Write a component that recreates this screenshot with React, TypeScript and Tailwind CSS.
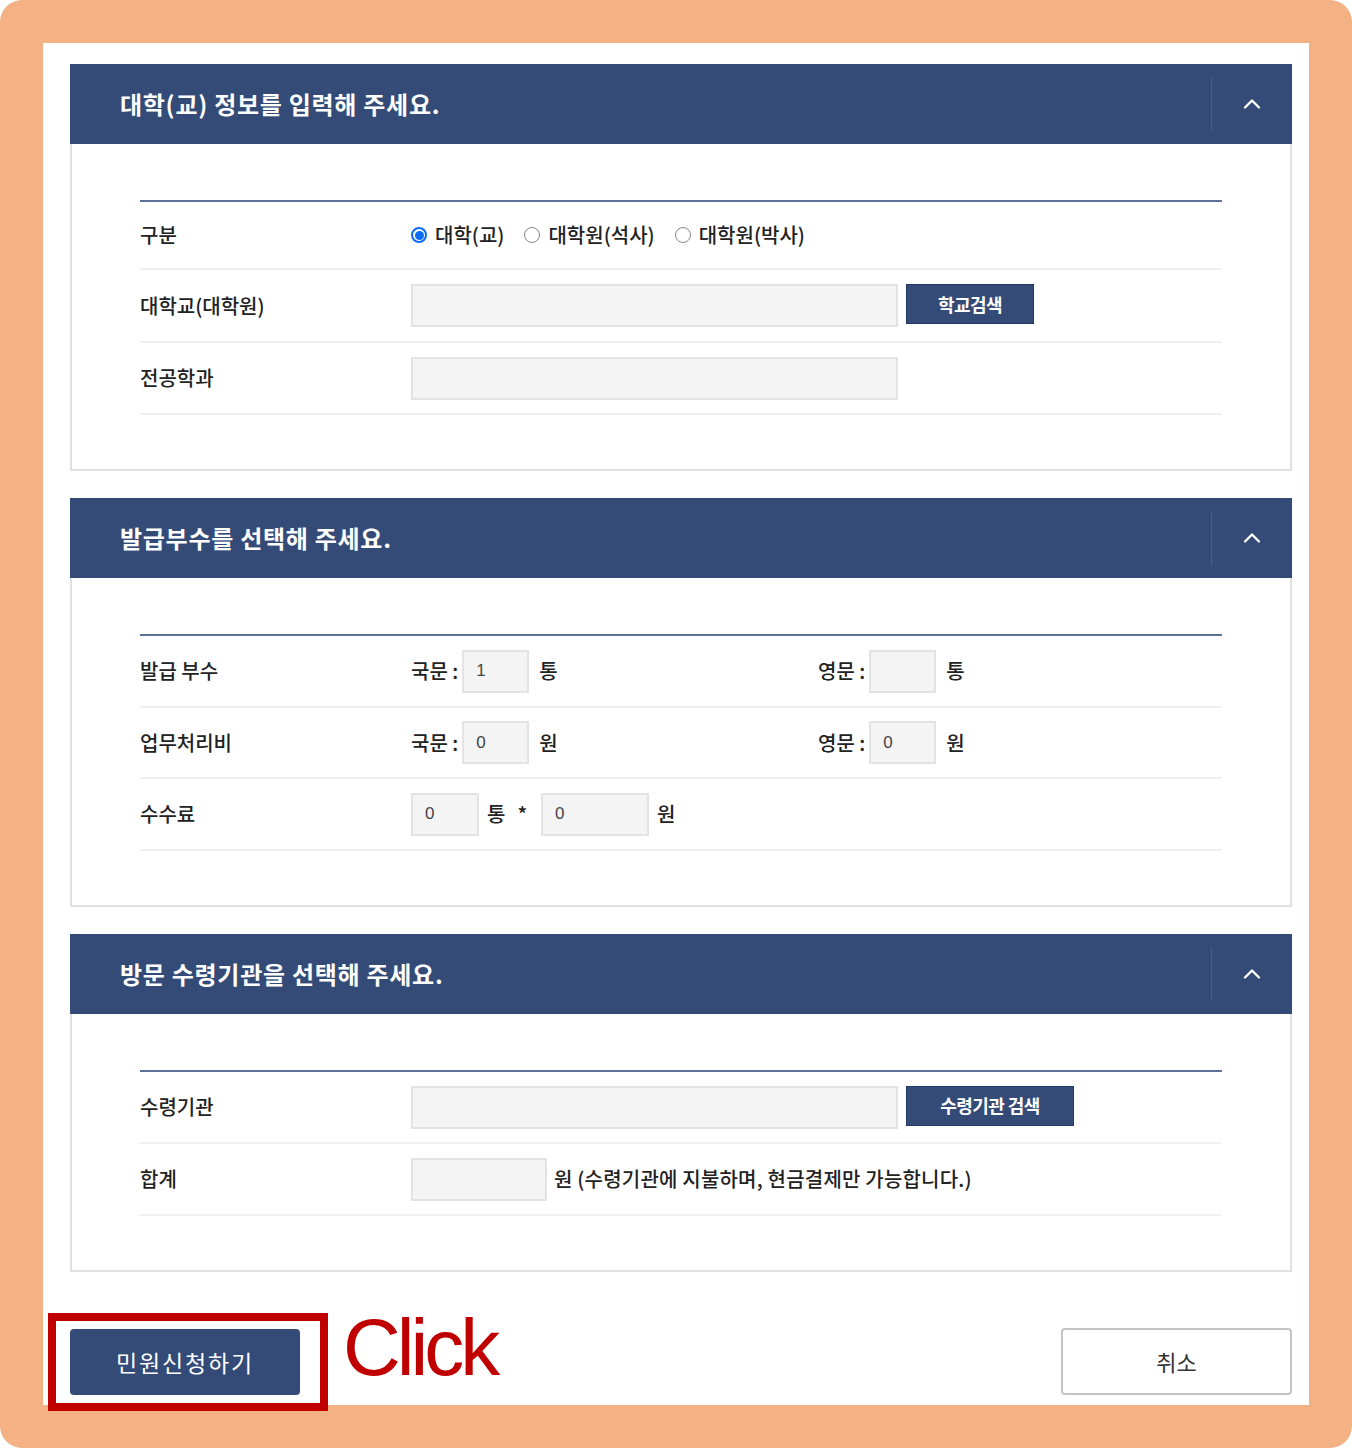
import { ChevronUp } from 'lucide-react'

const font = { fontFamily: '"Noto Sans CJK KR", "Noto Sans", sans-serif' }

function SectionHeader({ title }: { title: string }) {
  return (
    <div className="flex h-[80px] items-center bg-[#344b78]">
      <h2 className="flex-1 pl-[50px] text-[24px] font-bold tracking-[0.03em] text-white">{title}</h2>
      <div className="h-[53px] w-px bg-[#4b5f88]" />
      <div className="flex w-[80px] items-center justify-center">
        <ChevronUp className="h-7 w-7 text-white" strokeWidth={2} />
      </div>
    </div>
  )
}

function Row({ label, children, h = 'h-[72px]' }: { label: string; children?: React.ReactNode; h?: string }) {
  return (
    <div className={`flex items-center border-b-2 border-[#f0f0f0] ${h}`}>
      <div className="w-[271px] text-[20px] font-medium text-[#222]">{label}</div>
      <div className="flex flex-1 items-center">{children}</div>
    </div>
  )
}

function Field({ w, value = '' }: { w: string; value?: string }) {
  return (
    <div
      className={`flex h-[43px] items-center border-2 border-[#e3e3e3] bg-[#f4f4f4] pl-[12px] text-[17px] text-[#444] ${w}`}
      style={{ fontFamily: '"Liberation Sans", Arial, sans-serif' }}
    >
      {value}
    </div>
  )
}

function SearchButton({ label, w }: { label: string; w: string }) {
  return (
    <button className={`mb-[3px] ml-[8px] flex h-[40px] items-center justify-center border border-[#223a66] bg-[#344b78] text-[18px] font-bold tracking-[-0.03em] text-white ${w}`}>
      {label}
    </button>
  )
}

function Radio({ checked, label }: { checked?: boolean; label: string }) {
  return (
    <label className="mr-[20px] flex items-center gap-[8px] text-[20px] font-medium text-[#222]">
      {checked ? (
        <span className="flex h-[16px] w-[16px] items-center justify-center rounded-full border-2 border-[#0b6cf5]">
          <span className="h-[9px] w-[9px] rounded-full bg-[#0b6cf5]" />
        </span>
      ) : (
        <span className="h-[16px] w-[16px] rounded-full border border-[#888] bg-white" />
      )}
      {label}
    </label>
  )
}

function Text({ children, className = '' }: { children: React.ReactNode; className?: string }) {
  return <span className={`whitespace-pre text-[20px] font-medium text-[#222] ${className}`}>{children}</span>
}

function Section({ title, children }: { title: string; children: React.ReactNode }) {
  return (
    <section>
      <SectionHeader title={title} />
      <div className="border-x-2 border-b-2 border-[#e0e0e0] px-[68px] pb-[54px] pt-[56px]">
        <div className="border-t-2 border-[#5d7098]">{children}</div>
      </div>
    </section>
  )
}

export default function App() {
  return (
    <div className="h-[1448px] w-[1352px] rounded-[22px] bg-[#f4b184] p-[43px]" style={font}>
      <div className="flex h-full flex-col bg-white pb-[10px] pl-[27px] pr-[17px] pt-[21px]">
        <div className="flex flex-col gap-[27px]">
          <Section title="대학(교) 정보를 입력해 주세요.">
            <Row label="구분" h="h-[68px]">
              <Radio checked label="대학(교)" />
              <Radio label="대학원(석사)" />
              <Radio label="대학원(박사)" />
            </Row>
            <Row label="대학교(대학원)" h="h-[73px]">
              <Field w="w-[487px]" />
              <SearchButton label="학교검색" w="w-[128px]" />
            </Row>
            <Row label="전공학과">
              <Field w="w-[487px]" />
            </Row>
          </Section>

          <Section title="발급부수를 선택해 주세요.">
            <Row label="발급 부수">
              <div className="flex w-[407px] items-center">
                <Text>국문 :</Text>
                <Field w="ml-[4px] w-[67px]" value="1" />
                <Text className="ml-[10px]">통</Text>
              </div>
              <Text>영문 :</Text>
              <Field w="ml-[4px] w-[67px]" />
              <Text className="ml-[10px]">통</Text>
            </Row>
            <Row label="업무처리비" h="h-[71px]">
              <div className="flex w-[407px] items-center">
                <Text>국문 :</Text>
                <Field w="ml-[4px] w-[67px]" value="0" />
                <Text className="ml-[10px]">원</Text>
              </div>
              <Text>영문 :</Text>
              <Field w="ml-[4px] w-[67px]" value="0" />
              <Text className="ml-[10px]">원</Text>
            </Row>
            <Row label="수수료">
              <Field w="w-[68px]" value="0" />
              <Text className="ml-[8px]">통</Text>
              <Text className="ml-[12px] mr-[14px] text-[16px]">*</Text>
              <Field w="w-[108px]" value="0" />
              <Text className="ml-[8px]">원</Text>
            </Row>
          </Section>

          <Section title="방문 수령기관을 선택해 주세요.">
            <Row label="수령기관">
              <Field w="w-[487px]" />
              <SearchButton label="수령기관 검색" w="w-[168px]" />
            </Row>
            <Row label="합계">
              <Field w="w-[136px]" />
              <Text className="ml-[7px] tracking-[0.01em]">원 (수령기관에 지불하며, 현금결제만 가능합니다.)</Text>
            </Row>
          </Section>
        </div>

        <div className="mt-auto flex items-end justify-between">
          <div className="flex items-center">
            <div className="relative">
              <button className="h-[66px] w-[230px] rounded-[4px] bg-[#344b78] text-[23px] tracking-[0.08em] text-white">
                민원신청하기
              </button>
              <div className="absolute -bottom-[16px] -left-[22px] -right-[28px] -top-[16px] border-[8px] border-[#c00000]" />
            </div>
            <span
              className="-mt-[28px] ml-[43px] text-[80px] leading-none tracking-[-4px] text-[#c00000]"
              style={{ fontFamily: '"Liberation Sans", Arial, sans-serif' }}
            >
              Click
            </span>
          </div>
          <button className="h-[67px] w-[231px] rounded-[4px] border-2 border-[#c4c4c4] bg-white text-[22px] text-[#333]">
            취소
          </button>
        </div>
      </div>
    </div>
  )
}
